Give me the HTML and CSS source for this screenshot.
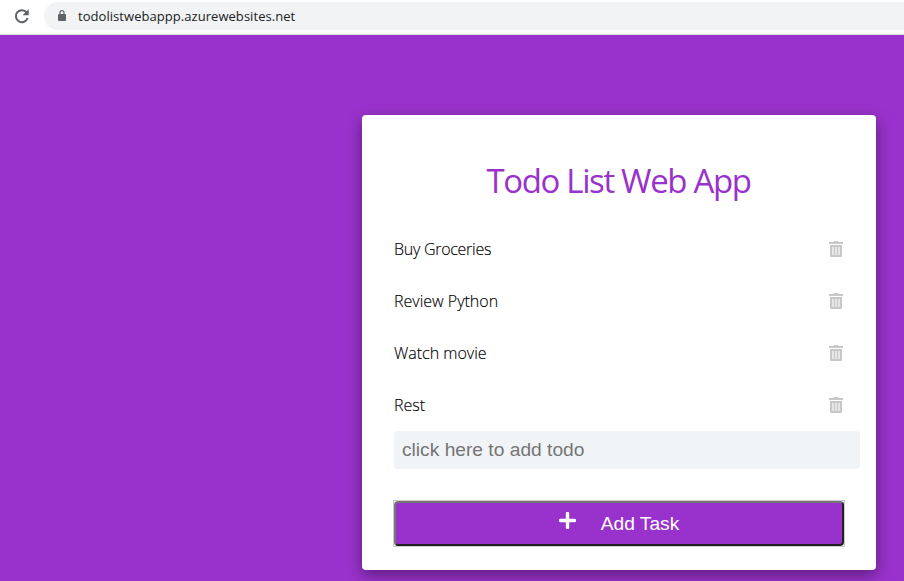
FILE: index.html
```html
<!DOCTYPE html>
<html lang="en">
<head>
<meta charset="utf-8">
<title>Todo List Web App</title>
<link rel="stylesheet" href="styles.css">
</head>
<body>
<header class="toolbar">
  <svg class="reload" width="16" height="16" viewBox="0 0 16 16"><path d="M12.700 4.600A6 6 0 1 0 13.600 10" fill="none" stroke="#5f6368" stroke-width="2"/><path d="M14.700 1v6.200H8.500z" fill="#5f6368"/></svg>
  <div class="address">
    <svg class="lock" width="8" height="11" viewBox="0 0 8 11"><path d="M1 4h6a1 1 0 0 1 1 1v5a1 1 0 0 1-1 1H1a1 1 0 0 1-1-1V5a1 1 0 0 1 1-1z" fill="#5f6368"/><path d="M2 4.500V2.600a2 2 0 0 1 4 0v1.900" fill="none" stroke="#5f6368" stroke-width="1.200"/></svg>
    <span>todolistwebappp.azurewebsites.net</span>
  </div>
</header>
<main class="page">
  <section class="card">
    <h1 class="title">Todo List Web App</h1>
    <ul class="list">
      <li class="item"><span class="first">Buy Groceries</span><svg class="trash" width="14" height="16" viewBox="0 0 14 16"><use href="#bin"/></svg></li>
      <li class="item"><span>Review Python</span><svg class="trash" width="14" height="16" viewBox="0 0 14 16"><use href="#bin"/></svg></li>
      <li class="item"><span>Watch movie</span><svg class="trash" width="14" height="16" viewBox="0 0 14 16"><use href="#bin"/></svg></li>
      <li class="item"><span>Rest</span><svg class="trash" width="14" height="16" viewBox="0 0 14 16"><use href="#bin"/></svg></li>
    </ul>
    <input class="entry" type="text" placeholder="click here to add todo">
    <div class="frame"><button class="add" type="button"><svg class="plus" width="17" height="17" viewBox="0 0 17 17"><path d="M8.500 1.500v14M1.500 8.500h14" stroke="#fff" stroke-width="3.400" stroke-linecap="round"/></svg><span>Add Task</span></button></div>
  </section>
</main>
<svg class="symbols" width="0" height="0"><defs><g id="bin"><path fill="#c8c8c8" stroke="none" d="M0 1h4.200l.6-1h4.400l.6 1H14v2H0zM1 4h12v11a1 1 0 0 1-1 1H2a1 1 0 0 1-1-1z"/><path fill="#e6e6e6" d="M3 6h2v8H3zM6 6h2v8H6zM9 6h2v8H9z"/></g></defs></svg>
</body>
</html>
```
FILE: styles.css
```css
* { box-sizing: border-box; }
body { margin: 0; height: 581px; overflow: hidden; background: #9932cc; font-family: "Open Sans", sans-serif; }
.toolbar { display: flex; align-items: center; height: 35px; padding: 0 0 3px 14px; background: #fff; border-bottom: 1px solid #dadce0; }
.reload { flex: none; margin-right: 14px; }
.address { display: flex; align-items: center; flex: 1; height: 28px; padding-left: 14px; border-radius: 14px 0 0 14px; background: #f1f3f4; color: #202124; font: 13px "Open Sans", sans-serif; letter-spacing: 0.050px; }
.lock { margin-right: 12px; }
.page { padding: 80px 28px 0 362px; }
.card { width: 514px; height: 455px; padding: 32px; background: #fff; border-radius: 4px; box-shadow: 0 5px 15px rgba(0,0,0,.4); }
.title { margin: 10px 1px 18px 0; text-align: center; color: #9932cc; font-size: 33px; line-height: 48px; font-weight: 400; letter-spacing: -1.360px; }
.list { margin: 0; padding: 0; list-style: none; }
.item { display: flex; align-items: center; justify-content: space-between; height: 52px; font-size: 16px; font-weight: 300; color: #000; -webkit-text-stroke: 0.150px #000; }
.first { letter-spacing: -0.270px; }
.trash { margin-right: 1px; }
.entry { display: block; width: 466px; height: 38px; padding: 8px; border: 0; border-radius: 4px; background: #f0f4f7; font: 19.200px "Liberation Sans", sans-serif; }
.entry::placeholder { color: #757575; }
.frame { width: 452px; margin: 31px -1px 0; border: 1px solid #ccc; }
.add { display: flex; align-items: center; justify-content: center; width: 450px; height: 45px; padding: 0; border: 2px solid; border-color: #767676 #212121 #212121 #767676; border-radius: 4px; background: #9932cc; color: #fff; font: 19.200px "Liberation Sans", sans-serif; }
.plus { margin: 0 25px 6px 0; }
.symbols { position: absolute; }
```
